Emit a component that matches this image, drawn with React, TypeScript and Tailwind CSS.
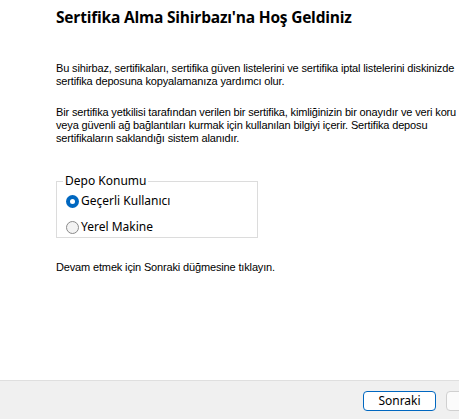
import React, { useState } from 'react';

const App: React.FC = () => {
  const [location, setLocation] = useState<'user' | 'machine'>('user');

  return (
    <div className="w-[459px] h-[419px] bg-white flex flex-col overflow-hidden font-['Liberation_Sans',sans-serif] text-black">
      <div className="flex-1 pl-[56px] overflow-hidden">
        <h1 className="pt-[7px] text-[15.5px] leading-[20px] font-bold font-['Open_Sans',sans-serif] whitespace-nowrap tracking-[-0.2px]">
          Sertifika Alma Sihirbazı'na Hoş Geldiniz
        </h1>

        <div className="mt-[35px] text-[11px] leading-[13px] whitespace-nowrap tracking-[-0.15px]">
          <p>Bu sihirbaz, sertifikaları, sertifika güven listelerini ve sertifika iptal listelerini diskinizde</p>
          <p>sertifika deposuna kopyalamanıza yardımcı olur.</p>
        </div>

        <div className="mt-[18px] text-[11px] leading-[13px] whitespace-nowrap tracking-[-0.15px]">
          <p>Bir sertifika yetkilisi tarafından verilen bir sertifika, kimliğinizin bir onayıdır ve veri koru</p>
          <p>veya güvenli ağ bağlantıları kurmak için kullanılan bilgiyi içerir. Sertifika deposu</p>
          <p>sertifikaların saklandığı sistem alanıdır.</p>
        </div>

        <fieldset className="mt-[29px] w-[202px] h-[64px] border border-[#dcdcdc] pl-[9px] pt-[1px] text-[12px] font-['Noto_Sans',sans-serif]">
          <legend className="ml-[-3px] px-[2px] leading-[14px]">Depo Konumu</legend>
          <label className="flex items-center gap-[2px] h-[24px] cursor-default" onClick={() => setLocation('user')}>
            <span className={location === 'user'
              ? 'w-[13px] h-[13px] rounded-full bg-[#0067c0] flex items-center justify-center'
              : 'w-[13px] h-[13px] rounded-full border border-[#8a8a8a] bg-[#f3f3f3]'}>
              {location === 'user' && <span className="w-[5px] h-[5px] rounded-full bg-white" />}
            </span>
            <span>Geçerli Kullanıcı</span>
          </label>
          <label className="flex items-center gap-[2px] h-[28px] cursor-default" onClick={() => setLocation('machine')}>
            <span className={location === 'machine'
              ? 'w-[13px] h-[13px] rounded-full bg-[#0067c0] flex items-center justify-center'
              : 'w-[13px] h-[13px] rounded-full border border-[#8a8a8a] bg-[#f3f3f3]'}>
              {location === 'machine' && <span className="w-[5px] h-[5px] rounded-full bg-white" />}
            </span>
            <span>Yerel Makine</span>
          </label>
        </fieldset>

        <p className="mt-[23px] text-[11px] leading-[13px] whitespace-nowrap tracking-[-0.15px]">
          Devam etmek için Sonraki düğmesine tıklayın.
        </p>
      </div>

      <div className="h-[39px] bg-[#f0f0f0] border-t border-[#dfdfdf] flex items-start pt-[10px] pl-[363px] gap-[10px] overflow-hidden">
        <button className="shrink-0 w-[73px] h-[20px] rounded-[4px] border border-[#0067c0] bg-white text-[12px] leading-[16px] font-['Noto_Sans',sans-serif]">
          Sonraki
        </button>
        <button className="shrink-0 w-[73px] h-[20px] rounded-[4px] border border-[#d0d0d0] bg-[#fbfbfb]" aria-label="İptal" />
      </div>
    </div>
  );
};

export default App;
